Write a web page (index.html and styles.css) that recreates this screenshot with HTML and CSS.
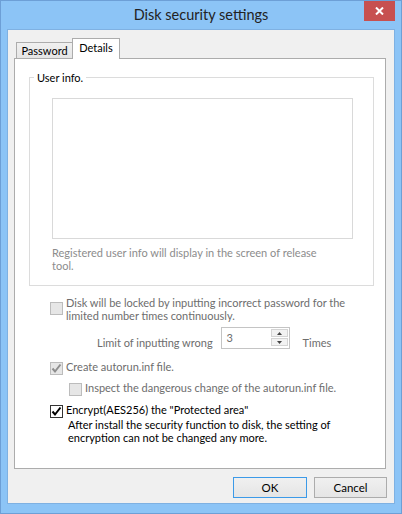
FILE: index.html
```html
<!DOCTYPE html>
<html lang="en">
<head>
    <meta charset="UTF-8">
    <meta name="viewport" content="width=device-width, initial-scale=1.0">
    <title>Disk security settings</title>
    <link rel="stylesheet" href="styles.css">
</head>
<body>
    <div class="window">
        <div class="titlebar">
            <span></span>
            <div class="title">Disk security settings</div>
            <div class="close">
                <svg width="9" height="8" viewBox="0 0 9 8"><path d="M1 0.5 L8 7.5 M8 0.5 L1 7.5" stroke="#fff" stroke-width="2"/></svg>
            </div>
        </div>
        <div class="client">
            <div class="tabs">
                <div class="tab">Password</div>
                <div class="tab active">Details</div>
            </div>
            <div class="panel">
                <div class="group">
                    <span class="legend">User info.</span>
                    <div class="userinfo"></div>
                    <p class="hint">Registered user info will display in the screen of release<br>tool.</p>
                </div>

                <div class="check-row lock disabled">
                    <span class="box"></span>
                    <span class="label">Disk will be locked by inputting incorrect password for the<br>limited number times continuously.</span>
                </div>

                <div class="limit-row disabled">
                    <span class="label">Limit of inputting wrong</span>
                    <div class="spin">
                        <span class="spin-value">3</span>
                        <div class="spin-btns">
                            <span class="spin-btn"><svg width="5" height="3" viewBox="0 0 5 3"><path d="M2.5 0 L5 3 L0 3 Z" fill="#444"/></svg></span>
                            <span class="spin-btn"><svg width="5" height="3" viewBox="0 0 5 3"><path d="M0 0 L5 0 L2.5 3 Z" fill="#444"/></svg></span>
                        </div>
                    </div>
                    <span class="label">Times</span>
                </div>

                <div class="check-row autorun disabled">
                    <span class="box checked">
                        <svg width="11" height="11" viewBox="0 0 11 11"><path d="M1.5 5.5 L4 8.5 L9.5 1.5" fill="none" stroke="#8e8e8e" stroke-width="2"/></svg>
                    </span>
                    <span class="label">Create autorun.inf file.</span>
                </div>

                <div class="check-row inspect disabled">
                    <span class="box"></span>
                    <span class="label">Inspect the dangerous change of the autorun.inf file.</span>
                </div>

                <div class="check-row encrypt">
                    <span class="box checked">
                        <svg width="11" height="11" viewBox="0 0 11 11"><path d="M1.5 5.5 L4 8.5 L9.5 1.5" fill="none" stroke="#000" stroke-width="2"/></svg>
                    </span>
                    <span class="label">Encrypt(AES256) the "Protected area"</span>
                </div>
                <p class="note">After install the security function to disk, the setting of<br>encryption can not be changed any more.</p>
            </div>
            <div class="buttons">
                <button class="default">OK</button>
                <button class="cancel">Cancel</button>
            </div>
        </div>
    </div>
</body>
</html>
```

FILE: styles.css
```css
body {
    margin: 0;
    font-family: Lato, "Noto Sans", sans-serif;
    font-size: 11px;
    color: #000;
}

.window {
    width: 402px;
    height: 514px;
    box-sizing: border-box;
    border: 1px solid #6d9fd6;
    background-color: #8cc4f6;
    display: flex;
    flex-direction: column;
}

.titlebar {
    height: 28px;
    display: grid;
    grid-template-columns: 37px 1fr 37px;
    align-items: start;
}

.title {
    text-align: center;
    font-size: 14.5px;
    line-height: 28px;
    color: #222;
}

.close {
    width: 31px;
    height: 20px;
    background-color: #c75050;
    display: flex;
    align-items: center;
    justify-content: center;
}

.client {
    margin: 0 6px;
    height: 475px;
    box-sizing: border-box;
    border: 1px solid #7fb1e2;
    background-color: #f0f0f0;
    display: flex;
    flex-direction: column;
}

/* tabs */
.tabs {
    display: flex;
    align-items: flex-end;
    height: 29px;
    margin: 0 0 -1px 8px;
    position: relative;
    z-index: 1;
}

.tab {
    box-sizing: border-box;
    width: 57px;
    height: 16px;
    margin: 0 -1px 1px 0;
    border: 1px solid #acacac;
    border-bottom: none;
    background: linear-gradient(#f0f0f0, #e5e5e5);
    text-align: center;
    line-height: 13px;
    padding-top: 1px;
}

.tab.active {
    width: 48px;
    height: 21px;
    margin: 0;
    padding-top: 2px;
    background: #fff;
    position: relative;
}

.panel {
    margin-left: 6px;
    width: 372px;
    height: 411px;
    box-sizing: border-box;
    border: 1px solid #acacac;
    background-color: #fff;
}

/* user info group */
.group {
    position: relative;
    margin: 18px 0 0 14px;
    width: 345px;
    height: 209px;
    box-sizing: border-box;
    border: 1px solid #dcdcdc;
    padding: 20px 0 0 22px;
}

.legend {
    position: absolute;
    left: 4px;
    top: -7px;
    padding: 0 3px;
    background-color: #fff;
    line-height: 13px;
}

.userinfo {
    width: 301px;
    height: 141px;
    box-sizing: border-box;
    border: 1px solid #d9d9d9;
}

.hint {
    margin: 7px 0 0;
    line-height: 13px;
    color: #8c8c8c;
}

/* options */
.check-row {
    display: flex;
    align-items: flex-start;
    gap: 3px;
    margin-left: 35px;
    line-height: 13px;
}

.box {
    flex: none;
    width: 13px;
    height: 13px;
    box-sizing: border-box;
    margin-top: 2px;
    border: 1px solid #333;
    background-color: #fff;
}

.box svg {
    display: block;
}

.disabled {
    color: #6d6d6d;
}

.disabled .box {
    border-color: #bcbcbc;
    background-color: #e6e6e6;
}

.lock {
    margin-top: 10px;
}

.lock .box {
    margin-top: 6px;
}

.limit-row {
    display: flex;
    align-items: flex-end;
    margin: 5px 0 0 82px;
    line-height: 13px;
}

.spin {
    display: flex;
    width: 69px;
    height: 22px;
    box-sizing: border-box;
    margin: 0 13px 0 8px;
    border: 1px solid #c4c4c4;
    background-color: #fff;
}

.spin-value {
    padding: 3px 0 0 5px;
}

.spin-btns {
    display: flex;
    flex-direction: column;
    gap: 1px;
    margin: 1px 1px 0 auto;
}

.spin-btn {
    width: 17px;
    height: 8px;
    box-sizing: border-box;
    border: 1px solid #d4d4d4;
    background-color: #f2f2f2;
    display: flex;
    align-items: center;
    justify-content: center;
}

.spin-btn svg {
    display: block;
}

.autorun {
    margin-top: 11px;
}

.inspect {
    margin: 6px 0 0 54px;
}

.encrypt {
    margin-top: 7px;
}

.note {
    margin: 0 0 0 53px;
    line-height: 13px;
}

/* dialog buttons */
.buttons {
    display: flex;
    justify-content: flex-end;
    gap: 7px;
    margin: 8px 7px 0 0;
}

button {
    width: 73px;
    height: 21px;
    padding: 0;
    font-family: inherit;
    font-size: 11.5px;
    color: #000;
    border: 1px solid #acacac;
    background: linear-gradient(#f0f0f0, #e5e5e5);
}

button.default {
    width: 74px;
    border-color: #3c9ae8;
}
```
